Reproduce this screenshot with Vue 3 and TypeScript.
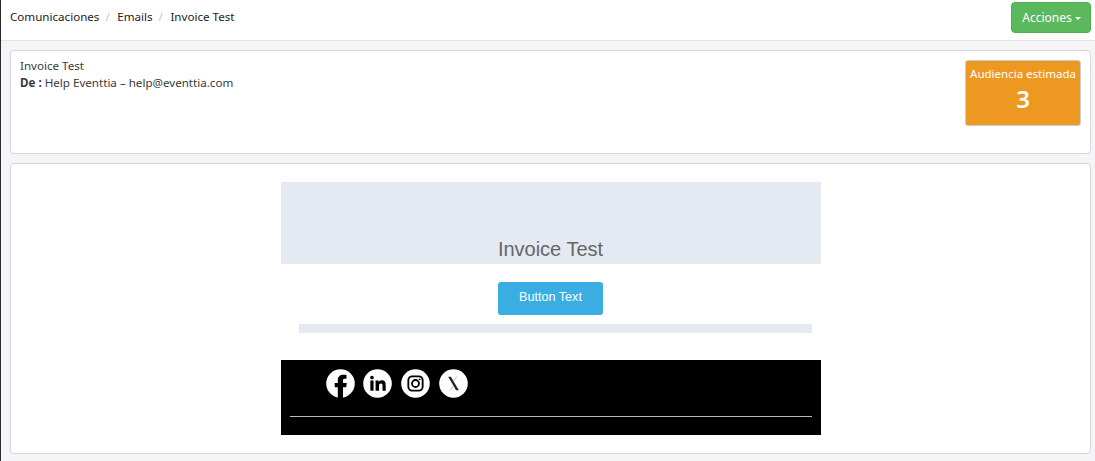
<script setup lang="ts">
const crumbs: string[] = ['Comunicaciones', 'Emails', 'Invoice Test']
</script>

<template>
  <div class="page">
    <header class="topbar">
      <nav class="crumbs">
        <template v-for="(c, i) in crumbs" :key="c">
          <span v-if="i > 0" class="sep">/</span>
          <span class="crumb">{{ c }}</span>
        </template>
      </nav>
      <button class="actions">Acciones<span class="caret"></span></button>
    </header>
    <section class="card info">
      <div class="meta">
        <div>Invoice Test</div>
        <div><b>De :</b> Help Eventtia – help@eventtia.com</div>
      </div>
      <div class="audience">
        <div class="aud-label">Audiencia estimada</div>
        <div class="aud-num">3</div>
      </div>
    </section>
    <section class="card preview">
      <div class="email">
        <div class="email-head">Invoice Test</div>
        <div class="email-action"><a class="email-btn">Button Text</a></div>
        <div class="email-rule"></div>
        <div class="email-foot">
          <div class="socials">
            <svg viewBox="0 0 30 30" class="soc"><circle cx="15" cy="15" r="14.8" fill="#fff"/><path d="M12.2 30V18.8H9v-4.2h3.2v-3c0-3.6 2.2-5.6 5.6-5.6 1.5 0 2.8.1 3.4.2v3.8h-2c-1.5 0-1.6.9-1.6 2.1v2.5h3.9l-.6 4.2h-3.3V30z" fill="#000"/></svg>
            <svg viewBox="0 0 30 30" class="soc"><circle cx="15" cy="15" r="14.8" fill="#fff"/><path d="M7.6 12h3.3v10.6H7.6zM9.25 6.9a1.9 1.9 0 1 1 0 3.8 1.9 1.9 0 0 1 0-3.8zM13 12h3.1v1.5c.5-.9 1.6-1.8 3.3-1.8 3.5 0 4.1 2.3 4.1 5.3v5.6h-3.3v-5c0-1.2 0-2.7-1.7-2.7s-1.9 1.3-1.9 2.6v5.1H13z" fill="#000"/></svg>
            <svg viewBox="0 0 30 30" class="soc"><circle cx="15" cy="15" r="14.8" fill="#fff"/><rect x="7.6" y="7.6" width="14.8" height="14.8" rx="4" fill="none" stroke="#000" stroke-width="1.9"/><circle cx="15" cy="15" r="3.6" fill="none" stroke="#000" stroke-width="1.9"/><circle cx="19.3" cy="10.7" r="1" fill="#000"/></svg>
            <svg viewBox="0 0 30 30" class="soc"><circle cx="15" cy="15" r="14.8" fill="#fff"/><path d="M9.5 8h2.8l8.2 14h-2.8z" fill="#222"/><path d="M19.3 8l-3.6 4.4-.7-1.1L17.7 8zM10.7 22l3.6-4.3.7 1.1L12.3 22z" fill="#ccc"/></svg>
          </div>
          <div class="foot-line"></div>
        </div>
      </div>
    </section>
  </div>
</template>

<style>
html, body { margin: 0; background: #f5f5f7; }
</style>

<style scoped>
.page {
  height: 461px;
  box-sizing: border-box;
  border-left: 1px solid #2a2a33;
  background: #f5f5f7;
  font-family: "Noto Sans", "Open Sans", sans-serif;
  font-size: 12px;
  color: #3a3a3a;
  display: flex;
  flex-direction: column;
  overflow: hidden;
}
.topbar {
  height: 41px;
  box-sizing: border-box;
  background: #fff;
  border-bottom: 1px solid #e3e3e6;
  display: flex;
  justify-content: space-between;
  align-items: flex-start;
  padding: 2px 4px 0 9px;
  flex: none;
}
.crumbs { display: flex; align-items: center; height: 29px; color: #222; font-size: 11.6px; }
.sep { color: #c4c4c4; margin: 0 7.5px 0 6px; }
.actions {
  width: 80px;
  height: 31px;
  background: #5cb85c;
  border: 1px solid #4cae4c;
  border-radius: 4px;
  color: #fff;
  font: inherit;
  font-size: 12px;
  padding: 0 0 0 1px;
}
.caret {
  display: inline-block;
  margin-left: 3px;
  vertical-align: middle;
  border-top: 3px solid #fff;
  border-left: 3px solid transparent;
  border-right: 3px solid transparent;
}
.card {
  background: #fff;
  border: 1px solid #d6d6d9;
  border-radius: 4px;
  margin: 0 4px 0 9px;
  box-sizing: border-box;
  flex: none;
}
.info {
  margin-top: 9px;
  height: 104px;
  display: flex;
  justify-content: space-between;
  padding: 6px 9px 0;
}
.meta { line-height: 17px; font-size: 11.6px; }
.audience {
  width: 116px;
  height: 66px;
  margin-top: 3px;
  box-sizing: border-box;
  background: #ec9821;
  border: 1px solid #ccc;
  border-radius: 3px;
  color: #fff;
  text-align: center;
}
.aud-label { font-size: 11.5px; margin-top: 5px; line-height: 16px; white-space: nowrap; }
.aud-num { font-size: 24px; font-weight: 600; line-height: 32px; margin-top: 1px; }
.preview {
  margin-top: 9px;
  height: 291px;
  padding-top: 18px;
  display: flex;
  justify-content: center;
}
.email { width: 540px; font-family: "Liberation Sans", Arial, sans-serif; }
.email-head {
  height: 82px;
  box-sizing: border-box;
  background: #e4e9f2;
  text-align: center;
  font-size: 20px;
  line-height: 23px;
  color: #666;
  padding-top: 56px;
}
.email-action { display: flex; justify-content: center; padding-top: 18px; }
.email-btn {
  width: 105px;
  height: 33px;
  border-radius: 3px;
  background: #3aaee2;
  color: #fff;
  font-size: 12.6px;
  line-height: 31px;
  text-align: center;
}
.email-rule { height: 9px; background: #e4e9f2; margin: 9px 9px 0 18px; }
.email-foot {
  margin-top: 27px;
  height: 75px;
  background: #000;
  padding: 9px 9px 0;
  box-sizing: border-box;
}
.socials { display: flex; gap: 8.7px; padding-left: 36px; height: 30px; }
.soc { width: 29px; height: 29px; display: block; }
.foot-line { height: 1px; background: #bbb; margin-top: 17px; }
</style>
